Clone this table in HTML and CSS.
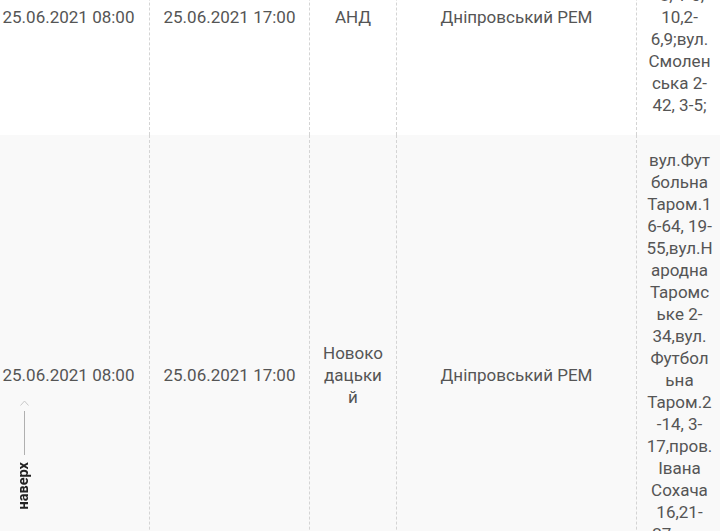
FILE: index.html
```html
<!DOCTYPE html>
<html lang="uk">
<head>
<meta charset="utf-8">
<title>Графік відключень</title>
<link rel="stylesheet" href="styles.css">
</head>
<body>
<div class="viewport">
  <table class="schedule">
    <tbody>
      <tr class="row row-a">
        <td class="c-start">25.06.2021 08:00</td>
        <td class="c-end">25.06.2021 17:00</td>
        <td class="c-place pre">АНД</td>
        <td class="c-rem">Дніпровський РЕМ</td>
        <td class="c-addr pre">вул.Бер
егова
Таром.1
-8, 1-5,
10,2-
6,9;вул.
Смолен
ська 2-
42, 3-5;</td>
      </tr>
      <tr class="row row-b">
        <td class="c-start">25.06.2021 08:00</td>
        <td class="c-end">25.06.2021 17:00</td>
        <td class="c-place pre">Новоко
дацьки
й</td>
        <td class="c-rem">Дніпровський РЕМ</td>
        <td class="c-addr c-addr-tall pre">вул.Фут
больна
Таром.1
6-64, 19-
55,вул.Н
ародна
Таромс
ьке 2-
34,вул.
Футбол
ьна
Таром.2
-14, 3-
17,пров.
Івана
Сохача
16,21-
27;вул.
Сонячн
а 1-9,
2-14;</td>
      </tr>
    </tbody>
  </table>
</div>

<a class="to-top" href="#">
  <svg class="to-top-arrow" width="9" height="6" viewBox="0 0 9 6" aria-hidden="true">
    <path d="M0.5 5.5 L4.5 1 L8.5 5.5" fill="none" stroke="#c8c8c8" stroke-width="1"/>
  </svg>
  <span class="to-top-line"></span>
  <span class="to-top-text">наверх</span>
</a>
</body>
</html>
```

FILE: styles.css
```css
html, body {
  margin: 0;
  padding: 0;
  background: #ffffff;
}

body {
  width: 720px;
  height: 531px;
  overflow: hidden;
  font-family: Roboto, "Noto Sans", sans-serif;
}

.viewport {
  margin-top: -102px;
  margin-left: -12px;
}

.schedule {
  table-layout: fixed;
  width: 735px;
  border-collapse: separate;
  border-spacing: 0;
  font-size: 17px;
  line-height: 22px;
  color: #555555;
}

.schedule td {
  box-sizing: border-box;
  padding: 14px 10px;
  text-align: center;
  vertical-align: middle;
  border-right: 1px dashed #d4d4d4;
}

.row-a {
  height: 237px;
  background: #ffffff;
}

.row-b {
  height: 480px;
  background: #f9f9f9;
}

.schedule .c-start { width: 162px; }
.schedule .c-end { width: 160px; }
.schedule .c-place { width: 87px; }
.schedule .c-rem { width: 240px; }
.schedule .c-addr { width: 86px; padding-left: 6px; padding-right: 6px; }

.pre {
  white-space: pre;
}

.schedule .c-addr-tall {
  padding-bottom: 4px;
}

.to-top {
  position: fixed;
  left: 16px;
  top: 400px;
  width: 16px;
  display: flex;
  flex-direction: column;
  align-items: center;
  text-decoration: none;
}

.to-top-arrow {
  display: block;
}

.to-top-line {
  display: block;
  width: 1px;
  height: 44px;
  margin-top: 5px;
  background: #b0b0b0;
}

.to-top-text {
  margin-top: 7px;
  writing-mode: vertical-rl;
  transform: rotate(180deg);
  font-family: Roboto, "Noto Sans", sans-serif;
  font-size: 14.5px;
  font-weight: 700;
  line-height: 16px;
  color: #222222;
}
```
